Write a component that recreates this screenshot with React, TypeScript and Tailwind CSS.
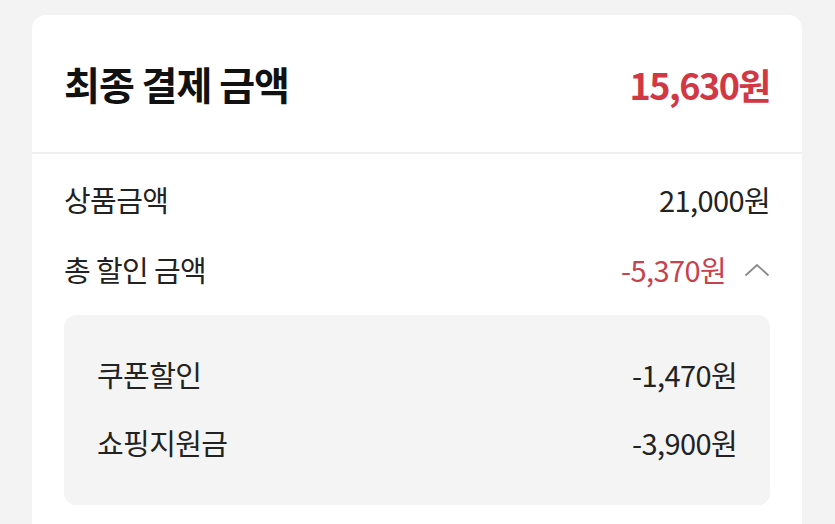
export default function App() {
  const font = { fontFamily: '"Noto Sans CJK KR", "Noto Sans", sans-serif' };
  return (
    <div className="w-[835px] h-[524px] overflow-hidden bg-[#f3f3f3] pt-[15px] px-[32px]" style={font}>
      <div className="w-[770px] h-[600px] bg-white rounded-t-[14px]">
        {/* 최종 결제 금액 */}
        <div className="h-[139px] flex items-center justify-between px-[32px] border-b-2 border-[#efefef]">
          <span className="text-[39px] font-bold text-[#111] tracking-[-1px]">최종 결제 금액</span>
          <span className="text-[36px] font-bold text-[#d13844] tracking-[-1.5px]">15,630원</span>
        </div>

        <div className="px-[32px] pt-[11px]">
          <div className="h-[70px] flex items-center justify-between text-[29px] text-[#222] tracking-[-0.6px]">
            <span>상품금액</span>
            <span>21,000원</span>
          </div>
          <div className="h-[70px] flex items-center justify-between text-[29px] text-[#222] tracking-[-0.6px]">
            <span>총 할인 금액</span>
            <div className="flex items-center gap-[18px]">
              <span className="text-[#c8414e]">-5,370원</span>
              <svg width="26" height="14" viewBox="0 0 26 14" fill="none" stroke="#8a8a8a" strokeWidth="1.8">
                <path d="M1.5 12.5 L13 2 L24.5 12.5" />
              </svg>
            </div>
          </div>

          {/* 할인 상세 */}
          <div className="mt-[10px] bg-[#f4f4f4] rounded-[12px] px-[33px] pt-[26px] pb-[28px]">
            <div className="h-[68px] flex items-center justify-between text-[29px] text-[#222] tracking-[-0.6px]">
              <span>쿠폰할인</span>
              <span>-1,470원</span>
            </div>
            <div className="h-[68px] flex items-center justify-between text-[29px] text-[#222] tracking-[-0.6px]">
              <span>쇼핑지원금</span>
              <span>-3,900원</span>
            </div>
          </div>
        </div>
      </div>
    </div>
  );
}
